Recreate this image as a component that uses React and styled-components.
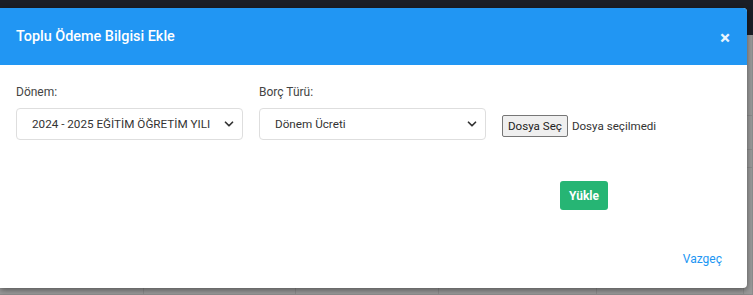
import React from 'react';
import styled, { createGlobalStyle } from 'styled-components';
import { ChevronDown } from 'lucide-react';

const GlobalStyle = createGlobalStyle`
    html, body {
        margin: 0;
        padding: 0;
        background: #9a9a9a;
        font-family: Roboto, "Liberation Sans", sans-serif;
    }
`

const Page = styled.div`
    position: relative;
    width: 753px;
    height: 295px;
    overflow: hidden;
    background: #9a9a9a;
`

const Navbar = styled.div`
    height: 35px;
    background: #1b1e26;
`

const Table = styled.div`
    display: grid;
    grid-template-columns: 144px 152px 143px 158px 147px 1fr;
    grid-template-rows: 81px 34px 18px 127px;
`

const Cell = styled.div`
    border-right: 1px solid #8c8c8c;
    border-bottom: 1px solid #8c8c8c;
`

const Modal = styled.div`
    position: absolute;
    top: 8px;
    left: 0;
    width: 747px;
    height: 280px;
    background: #fff;
    border-radius: 0 4px 4px 0;
    box-shadow: 0 2px 6px rgba(0, 0, 0, 0.45);
    display: flex;
    flex-direction: column;
    overflow: hidden;
`

const Header = styled.div`
    height: 57px;
    background: #2196f3;
    display: flex;
    align-items: center;
    justify-content: space-between;
    padding: 0 16px;
    flex-shrink: 0;
`

const Title = styled.h4`
    margin: 0;
    color: #fff;
    font-size: 14.4px;
    font-weight: 500;
`

const Close = styled.span`
    color: #fff;
    font-size: 19px;
    font-weight: 700;
    line-height: 1;
    margin-right: 1px;
    margin-top: 2px;
    opacity: 0.9;
`

const Body = styled.div`
    flex: 1;
    display: flex;
    flex-direction: column;
    padding: 19px 16px 0;
`

const FormRow = styled.div`
    display: grid;
    grid-template-columns: 227px 227px 1fr;
    column-gap: 16px;
`

const Field = styled.div`
    display: flex;
    flex-direction: column;
`

const Label = styled.label`
    font-size: 12px;
    line-height: 16px;
    color: #444;
    margin-bottom: 8px;
`

const SelectBox = styled.div`
    height: 32px;
    box-sizing: border-box;
    border: 1px solid #dedede;
    border-radius: 4px;
    display: flex;
    align-items: center;
    justify-content: space-between;
    padding: 0 6px 0 15px;
    font-size: 11.7px;
    color: #333;
    white-space: nowrap;
`

const FileField = styled.div`
    display: flex;
    align-items: center;
    margin-top: 27px;
    font-size: 11.6px;
    color: #333;
    white-space: nowrap;
`

const FileButton = styled.button`
    font-family: Roboto, "Liberation Sans", sans-serif;
    font-size: 11.6px;
    color: #222;
    background: #efefef;
    border: 1px solid #767676;
    border-radius: 2px;
    height: 22px;
    padding: 0 5px;
    margin-right: 4px;
`

const ActionRow = styled.div`
    display: flex;
    padding-left: 544px;
    margin-top: 41px;
`

const UploadButton = styled.button`
    font-family: Roboto, "Liberation Sans", sans-serif;
    background: #26b574;
    color: #fff;
    border: none;
    border-radius: 3px;
    height: 29px;
    width: 48px;
    font-size: 12px;
    font-weight: 700;
`

const Footer = styled.div`
    margin-top: auto;
    display: flex;
    justify-content: flex-end;
    padding: 0 9px 22px 0;
`

const CancelLink = styled.a`
    color: #2196f3;
    font-size: 12px;
    text-decoration: none;
`

const App = () => (
    <Page>
        <GlobalStyle />
        <Navbar />
        <Table>
            {Array.from({ length: 24 }).map((_, i) => <Cell key={i} />)}
        </Table>
        <Modal>
            <Header>
                <Title>Toplu Ödeme Bilgisi Ekle</Title>
                <Close>×</Close>
            </Header>
            <Body>
                <FormRow>
                    <Field>
                        <Label>Dönem:</Label>
                        <SelectBox>
                            <span>2024 - 2025 EĞİTİM ÖĞRETİM YILI</span>
                            <ChevronDown size={14} strokeWidth={3} color="#333" />
                        </SelectBox>
                    </Field>
                    <Field>
                        <Label>Borç Türü:</Label>
                        <SelectBox>
                            <span>Dönem Ücreti</span>
                            <ChevronDown size={14} strokeWidth={3} color="#333" />
                        </SelectBox>
                    </Field>
                    <FileField>
                        <FileButton>Dosya Seç</FileButton>
                        <span>Dosya seçilmedi</span>
                    </FileField>
                </FormRow>
                <ActionRow>
                    <UploadButton>Yükle</UploadButton>
                </ActionRow>
                <Footer>
                    <CancelLink href="#">Vazgeç</CancelLink>
                </Footer>
            </Body>
        </Modal>
    </Page>
)

export default App;
